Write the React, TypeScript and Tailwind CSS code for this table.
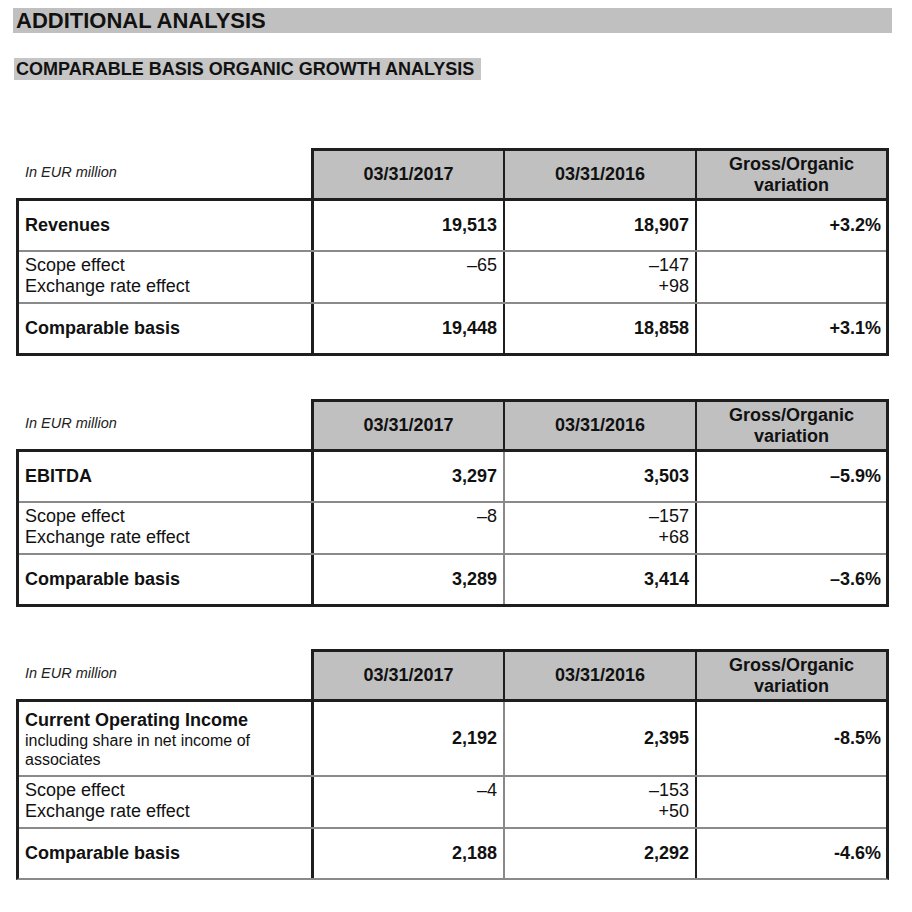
import React from 'react';

type Row = {
  label: string;
  sub?: string;
  c1: string;
  c2: string;
  c3: string;
};

type TableProps = {
  main: Row;
  scope: { c1: string[]; c2: string[] };
  comp: Row;
  tall?: boolean;
  softMid?: boolean;
  softBottom?: boolean;
};

const TABLES: TableProps[] = [
  {
    main: { label: 'Revenues', c1: '19,513', c2: '18,907', c3: '+3.2%' },
    scope: { c1: ['–65'], c2: ['–147', '+98'] },
    comp: { label: 'Comparable basis', c1: '19,448', c2: '18,858', c3: '+3.1%' }
  },
  {
    main: { label: 'EBITDA', c1: '3,297', c2: '3,503', c3: '–5.9%' },
    scope: { c1: ['–8'], c2: ['–157', '+68'] },
    comp: { label: 'Comparable basis', c1: '3,289', c2: '3,414', c3: '–3.6%' },
    softMid: true
  },
  {
    main: {
      label: 'Current Operating Income',
      sub: 'including share in net income of associates',
      c1: '2,192',
      c2: '2,395',
      c3: '-8.5%'
    },
    scope: { c1: ['–4'], c2: ['–153', '+50'] },
    comp: { label: 'Comparable basis', c1: '2,188', c2: '2,292', c3: '-4.6%' },
    tall: true,
    softMid: true,
    softBottom: true
  }
];

const DataTable: React.FC<TableProps> = ({ main, scope, comp, tall, softMid, softBottom }) => {
  const mid = softMid ? 'border-[#8a8a8a]' : 'border-[#1e1e1e]';

  return (
    <div className="ml-[16px] w-[873px]">
      {/* Header */}
      <div className="flex h-[50px]">
        <div className="w-[295px] flex items-center pl-[9px] text-[14.5px] italic text-[#222]">In EUR million</div>
        <div className="w-[578px] flex border-t-[3px] border-x-[3px] border-[#1e1e1e] bg-[#c0c0c0] text-[18px] font-bold text-[#111]">
          <div className="w-[191px] flex items-center justify-center border-r-2 border-[#1e1e1e]">03/31/2017</div>
          <div className="w-[192px] flex items-center justify-center border-r-2 border-[#1e1e1e]">03/31/2016</div>
          <div className="flex-1 flex items-center justify-center text-center leading-[21px]">
            Gross/Organic
            <br />
            variation
          </div>
        </div>
      </div>

      {/* Body */}
      <div
        className={`border-[3px] border-[#1e1e1e] text-[18px] text-[#111] ${
          softBottom ? 'border-b-[#8a8a8a] border-b-2' : ''
        }`}
      >
        <div className={`flex border-b-2 border-[#8a8a8a] ${tall ? 'h-[75px]' : 'h-[51px]'}`}>
          <div className="w-[295px] flex flex-col justify-center pl-[6px] border-r-[3px] border-[#1e1e1e]">
            <div className={`font-bold ${tall ? 'leading-[22px]' : ''}`}>{main.label}</div>
            {main.sub && <div className="text-[16px] leading-[19px] pr-[40px]">{main.sub}</div>}
          </div>
          <div className={`w-[191px] flex items-center justify-end pr-[6px] font-bold border-r-2 ${mid}`}>{main.c1}</div>
          <div className="w-[192px] flex items-center justify-end pr-[6px] font-bold border-r-2 border-[#1e1e1e]">{main.c2}</div>
          <div className="flex-1 flex items-center justify-end pr-[5px] font-bold">{main.c3}</div>
        </div>

        <div className="flex h-[52px] border-b-2 border-[#8a8a8a] leading-[21px]">
          <div className="w-[295px] pt-[3px] pl-[6px] border-r-[3px] border-[#1e1e1e]">
            <div>Scope effect</div>
            <div>Exchange rate effect</div>
          </div>
          <div className={`w-[191px] pt-[3px] pr-[6px] text-right border-r-2 ${mid}`}>
            {scope.c1.map((v) => (
              <div key={v}>{v}</div>
            ))}
          </div>
          <div className="w-[192px] pt-[3px] pr-[6px] text-right border-r-2 border-[#1e1e1e]">
            {scope.c2.map((v) => (
              <div key={v}>{v}</div>
            ))}
          </div>
          <div className="flex-1"></div>
        </div>

        <div className="flex h-[49px] font-bold">
          <div className="w-[295px] flex items-center pl-[6px] border-r-[3px] border-[#1e1e1e]">{comp.label}</div>
          <div className={`w-[191px] flex items-center justify-end pr-[6px] border-r-2 ${mid}`}>{comp.c1}</div>
          <div className="w-[192px] flex items-center justify-end pr-[6px] border-r-2 border-[#1e1e1e]">{comp.c2}</div>
          <div className="flex-1 flex items-center justify-end pr-[5px]">{comp.c3}</div>
        </div>
      </div>
    </div>
  );
};

export default function App() {
  return (
    <div className="w-[912px] min-h-[912px] bg-white pt-[8px] font-['Liberation_Sans',Arial,sans-serif] text-[#111]">
      {/* Section title */}
      <div className="ml-[13px] w-[879px] h-[25px] bg-[#c0c0c0] pl-[3px] flex items-center text-[22px] font-bold leading-none">
        ADDITIONAL ANALYSIS
      </div>

      <div className="mt-[25px] ml-[14px]">
        <span className="inline-block h-[22px] leading-[22px] pl-[2px] pr-[7px] bg-[#c6c6c6] text-[18px] font-bold">
          COMPARABLE BASIS ORGANIC GROWTH ANALYSIS
        </span>
      </div>

      <div className="mt-[66px]">
        <DataTable {...TABLES[0]} />
      </div>
      <div className="mt-[43px]">
        <DataTable {...TABLES[1]} />
      </div>
      <div className="mt-[42px]">
        <DataTable {...TABLES[2]} />
      </div>
    </div>
  );
}
